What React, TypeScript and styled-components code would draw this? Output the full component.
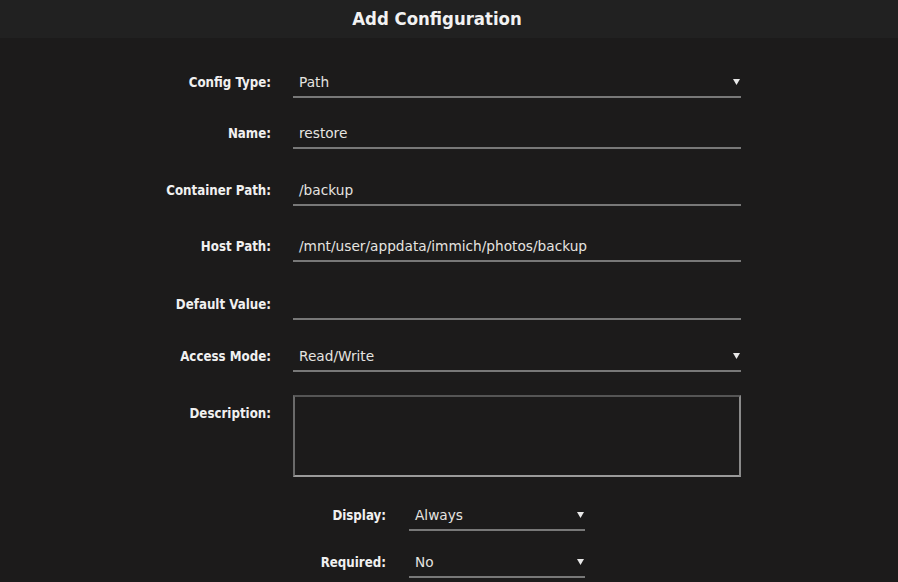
import React from 'react';
import styled, { createGlobalStyle } from 'styled-components';

const GlobalStyle = createGlobalStyle`
  html, body {
    margin: 0;
    padding: 0;
    background: #1c1b1b;
  }
  body {
    font-family: "DejaVu Sans Condensed", "DejaVu Sans", sans-serif;
    color: #e4e4e4;
  }
`;

const Page = styled.div`
  width: 898px;
  height: 582px;
  overflow: hidden;
  background: #1c1b1b;
`;

const Header = styled.div`
  height: 38px;
  background: #212121;
  display: flex;
  align-items: center;
  justify-content: center;
  font-size: 18.4px;
  font-weight: bold;
  color: #f2f2f2;
  padding-bottom: 1px;
  padding-right: 24px;
  box-sizing: border-box;
`;

const Form = styled.div`
  display: flex;
  flex-direction: column;
  padding-top: 29px;
`;

const Row = styled.div<{ $top: number; $labelWidth: number; $fieldWidth: number }>`
  display: grid;
  grid-template-columns: ${(p) => p.$labelWidth}px ${(p) => p.$fieldWidth}px;
  column-gap: ${(p) => (p.$labelWidth > 300 ? 23 : 22)}px;
  margin-top: ${(p) => p.$top}px;
  align-items: start;
`;

const Label = styled.div<{ $pad?: number }>`
  text-align: right;
  font-size: 13.2px;
  font-weight: bold;
  color: #f0f0f0;
  height: 29px;
  line-height: 31px;
  padding-top: ${(p) => p.$pad ?? 0}px;
`;

const Field = styled.div`
  position: relative;
  height: 29px;
  line-height: 31px;
  border-bottom: 2px solid #787878;
  padding-left: 6px;
  font-family: "DejaVu Sans", sans-serif;
  font-size: 13.7px;
  color: #e6e4e0;
  white-space: nowrap;
`;

const Arrow = styled.svg`
  position: absolute;
  right: 1px;
  top: 12px;
`;

const TextArea = styled.div`
  height: 78px;
  border: 2px solid;
  border-color: #555555 #8a8a8a #9a9a9a #6a6a6a;
`;

const Select = ({ value }: { value: string }) => (
  <Field>
    {value}
    <Arrow width="7" height="6" viewBox="0 0 7 6">
      <polygon points="0,0 7,0 3.5,6" fill="#e8e8e8" />
    </Arrow>
  </Field>
);

const App = () => {
  return (
    <Page>
      <GlobalStyle />
      <Header>Add Configuration</Header>
      <Form>
        <Row $top={0} $labelWidth={271} $fieldWidth={448}>
          <Label>Config Type:</Label>
          <Select value="Path" />
        </Row>
        <Row $top={20} $labelWidth={271} $fieldWidth={448}>
          <Label>Name:</Label>
          <Field>restore</Field>
        </Row>
        <Row $top={26} $labelWidth={271} $fieldWidth={448}>
          <Label>Container Path:</Label>
          <Field>/backup</Field>
        </Row>
        <Row $top={25} $labelWidth={271} $fieldWidth={448}>
          <Label>Host Path:</Label>
          <Field>/mnt/user/appdata/immich/photos/backup</Field>
        </Row>
        <Row $top={27} $labelWidth={271} $fieldWidth={448}>
          <Label>Default Value:</Label>
          <Field></Field>
        </Row>
        <Row $top={21} $labelWidth={271} $fieldWidth={448}>
          <Label>Access Mode:</Label>
          <Select value="Read/Write" />
        </Row>
        <Row $top={23} $labelWidth={271} $fieldWidth={448}>
          <Label $pad={3}>Description:</Label>
          <TextArea />
        </Row>
        <Row $top={23} $labelWidth={386} $fieldWidth={176}>
          <Label>Display:</Label>
          <Select value="Always" />
        </Row>
        <Row $top={16} $labelWidth={386} $fieldWidth={176}>
          <Label>Required:</Label>
          <Select value="No" />
        </Row>
      </Form>
    </Page>
  );
};

export default App;
